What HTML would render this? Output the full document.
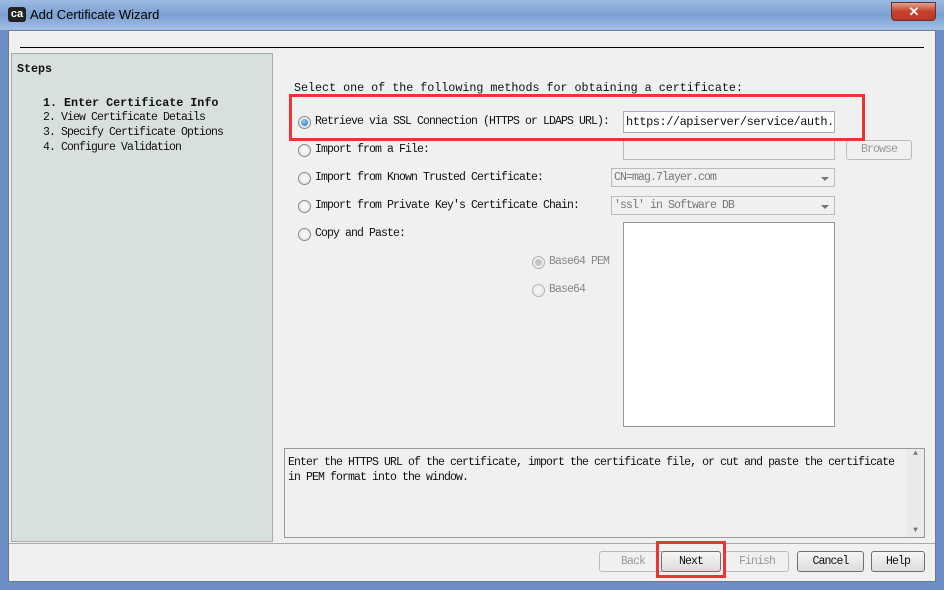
<!DOCTYPE html><html><head><style>
*{box-sizing:border-box;margin:0;padding:0}
body{width:944px;height:590px;overflow:hidden;background:#6b8fc4;font-family:"Liberation Mono",monospace;font-size:11.5px;letter-spacing:-0.9px;color:#111;position:relative}
.a{position:absolute;white-space:nowrap}
.title{left:0;top:0;width:944px;height:30px;background:linear-gradient(#9cbbe2,#7aa0d2 50%,#a4c0e4)}
.client{left:8px;top:30px;width:928px;height:552px;background:#f0f0f0;border:1px solid #6a7c95}
.r{width:13px;height:13px;border-radius:50%;border:1px solid #8a8a8a;background:radial-gradient(#fff,#ddd)}
.r.on::after{content:"";position:absolute;left:2px;top:2px;width:7px;height:7px;border-radius:50%;background:radial-gradient(circle at 40% 35%,#8fd0ff,#1469b0)}
.r.dis{opacity:.6}
.r.dis.on::after{background:#aaa}
.fld{border:1px solid #aab;background:#fff}
.dis{color:#999}
.btn{border:1px solid #707070;border-radius:3px;background:linear-gradient(#f6f6f6,#dcdcdc);text-align:center;line-height:19px}
.btn.d{border-color:#bbb;color:#999;background:#f0f0f0}
.combo{border:1px solid #bbb;background:#f0f0f0;color:#777;padding-left:2px;line-height:17px}
.combo::after{content:"";position:absolute;right:5px;top:8px;border:4px solid transparent;border-top:4px solid #777}
.w7{font-size:11.7px;letter-spacing:0}
</style></head><body>
<div class="a title"></div>
<div class="a" style="left:8px;top:7px;width:18px;height:15px;background:#222;border-radius:3px;color:#fff;font:bold 11px 'Liberation Sans',sans-serif;letter-spacing:0;text-align:center;line-height:15px">ca</div>
<div class="a" style="left:30px;top:7px;font:13px 'Liberation Sans',sans-serif;letter-spacing:0;color:#000">Add Certificate Wizard</div>
<div class="a" style="left:891px;top:2px;width:45px;height:19px;background:linear-gradient(#e0a090,#c8402c 50%,#b83a28);border:1px solid #6a3028;border-radius:0 0 4px 4px;color:#fff;text-align:center;font:bold 13px 'Liberation Sans',sans-serif;line-height:18px">✕</div>
<div class="a client"></div>
<div class="a" style="left:20px;top:47px;width:904px;height:1px;background:#000"></div>
<div class="a" style="left:11px;top:53px;width:262px;height:489px;background:#d7dfdf;border:1px solid #aaa"></div>
<div class="a w7" style="left:17px;top:62px;font-weight:bold">Steps</div>
<div class="a w7" style="left:43px;top:96px;font-weight:bold">1. Enter Certificate Info</div>
<div class="a" style="left:43px;top:111px">2. View Certificate Details</div>
<div class="a" style="left:43px;top:126px">3. Specify Certificate Options</div>
<div class="a" style="left:43px;top:141px">4. Configure Validation</div>
<div class="a w7" style="left:294px;top:81px">Select one of the following methods for obtaining a certificate:</div>
<div class="a r on" style="left:298px;top:116px"></div><div class="a" style="left:315px;top:115px">Retrieve via SSL Connection (HTTPS or LDAPS URL):</div>
<div class="a fld" style="left:623px;top:111px;width:212px;height:22px;padding:3px 2px;overflow:hidden;font-size:12px;letter-spacing:-0.5px">https://apiserver/service/auth.json</div>
<div class="a r" style="left:298px;top:144px"></div><div class="a" style="left:315px;top:143px">Import from a File:</div>
<div class="a" style="left:623px;top:139px;width:212px;height:21px;border:1px solid #bbb;background:#f0f0f0"></div>
<div class="a btn d" style="left:846px;top:140px;width:66px;height:20px;line-height:18px">Browse</div>
<div class="a r" style="left:298px;top:172px"></div><div class="a" style="left:315px;top:171px">Import from Known Trusted Certificate:</div>
<div class="a combo" style="left:611px;top:168px;width:224px;height:19px">CN=mag.7layer.com</div>
<div class="a r" style="left:298px;top:200px"></div><div class="a" style="left:315px;top:199px">Import from Private Key's Certificate Chain:</div>
<div class="a combo" style="left:611px;top:196px;width:224px;height:19px">'ssl' in Software DB</div>
<div class="a r" style="left:298px;top:228px"></div><div class="a" style="left:315px;top:227px">Copy and Paste:</div>
<div class="a fld" style="left:623px;top:222px;width:212px;height:205px;border-color:#999"></div>
<div class="a r dis on" style="left:532px;top:256px"></div><div class="a" style="left:549px;top:255px;color:#888">Base64 PEM</div>
<div class="a r dis" style="left:532px;top:284px"></div><div class="a" style="left:549px;top:283px;color:#888">Base64</div>
<div class="a" style="left:289px;top:94px;width:576px;height:47px;border:3px solid #ee3333"></div>
<div class="a" style="left:284px;top:448px;width:641px;height:90px;border:1px solid #999;background:#f0f0f0"></div>
<div class="a" style="left:288px;top:455px;line-height:15px;width:620px;white-space:normal">Enter the HTTPS URL of the certificate, import the certificate file, or cut and paste the certificate in PEM format into the window.</div>
<div class="a" style="left:907px;top:449px;width:17px;height:88px;background:#eaeaea;color:#777;font-size:8px;letter-spacing:0;text-align:center">▲<div style="position:absolute;bottom:2px;width:17px">▼</div></div>
<div class="a" style="left:9px;top:543px;width:926px;height:1px;background:#aaa"></div>
<div class="a btn d" style="left:599px;top:551px;width:68px;height:21px">Back</div>
<div class="a btn" style="left:661px;top:551px;width:60px;height:21px">Next</div>
<div class="a btn d" style="left:725px;top:551px;width:64px;height:21px">Finish</div>
<div class="a btn" style="left:797px;top:551px;width:67px;height:21px">Cancel</div>
<div class="a btn" style="left:871px;top:551px;width:54px;height:21px">Help</div>
<div class="a" style="left:656px;top:541px;width:70px;height:37px;border:3px solid #ee3333"></div>
</body></html>
